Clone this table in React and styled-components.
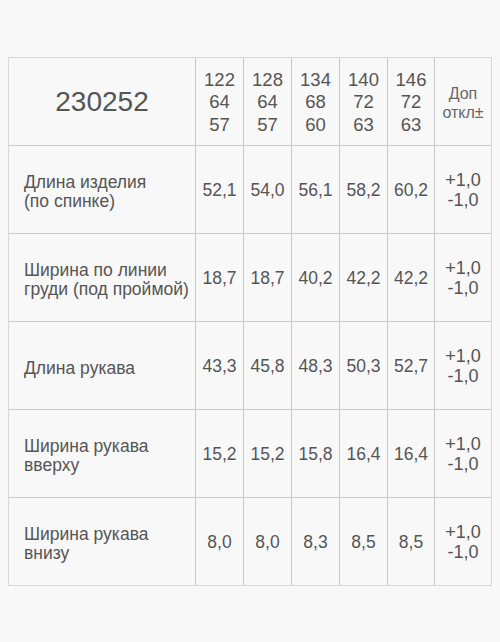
import React from "react";
import styled, { createGlobalStyle } from "styled-components";

const Global = createGlobalStyle`
  html, body { margin: 0; padding: 0; background: #f8f8f8; }
  body { font-family: "Liberation Sans", Arial, sans-serif; color: #555; }
`;

const Page = styled.div`
  padding: 57px 0 0 8px;
  min-height: 642px;
  box-sizing: border-box;
  background: #f8f8f8;
`;

const Grid = styled.div`
  display: grid;
  width: max-content;
  grid-template-columns: 186px repeat(4, 47px) 46px 56px;
  grid-auto-rows: 87px;
  gap: 1px;
  background: #c8c8c8;
  border: 1px solid #d8d8d8;
`;

const Cell = styled.div`
  background: #f8f8f8;
  display: flex;
  align-items: center;
  justify-content: center;
  text-align: center;
  font-size: 17.5px;
  line-height: 20px;
  color: #555;
  box-sizing: border-box;
`;

const Tolerance = styled(Cell)`
  font-size: 18px;
`;

const Article = styled(Cell)`
  font-size: 28px;
  line-height: 32px;
`;

const SizeHead = styled(Cell)`
  font-size: 18.5px;
  line-height: 22.5px;
  padding-top: 2px;
`;

const TolHead = styled(Cell)`
  font-size: 16px;
  line-height: 19px;
  color: #666;
  padding-top: 3px;
`;

const Label = styled(Cell)`
  justify-content: flex-start;
  text-align: left;
  font-size: 17.5px;
  line-height: 19px;
  padding: 5px 0 0 15px;
`;

const sizes = [
  ["122", "64", "57"],
  ["128", "64", "57"],
  ["134", "68", "60"],
  ["140", "72", "63"],
  ["146", "72", "63"],
];

const rows = [
  { label: ["Длина изделия", "(по спинке)"], values: ["52,1", "54,0", "56,1", "58,2", "60,2"] },
  { label: ["Ширина по линии", "груди (под проймой)"], values: ["18,7", "18,7", "40,2", "42,2", "42,2"] },
  { label: ["Длина рукава"], values: ["43,3", "45,8", "48,3", "50,3", "52,7"] },
  { label: ["Ширина рукава", "вверху"], values: ["15,2", "15,2", "15,8", "16,4", "16,4"] },
  { label: ["Ширина рукава", "внизу"], values: ["8,0", "8,0", "8,3", "8,5", "8,5"] },
];

const Lines = ({ items }) => (
  <div>
    {items.map((t, i) => (
      <React.Fragment key={i}>
        {i > 0 && <br />}
        {t}
      </React.Fragment>
    ))}
  </div>
);

export default function App() {
  return (
    <>
      <Global />
      <Page>
        <Grid>
          <Article>230252</Article>
          {sizes.map((s, i) => (
            <SizeHead key={i}>
              <Lines items={s} />
            </SizeHead>
          ))}
          <TolHead>
            <Lines items={["Доп", "откл±"]} />
          </TolHead>
          {rows.map((r, i) => (
            <React.Fragment key={i}>
              <Label>
                <Lines items={r.label} />
              </Label>
              {r.values.map((v, j) => (
                <Cell key={j}>{v}</Cell>
              ))}
              <Tolerance>
                <Lines items={["+1,0", "-1,0"]} />
              </Tolerance>
            </React.Fragment>
          ))}
        </Grid>
      </Page>
    </>
  );
}
